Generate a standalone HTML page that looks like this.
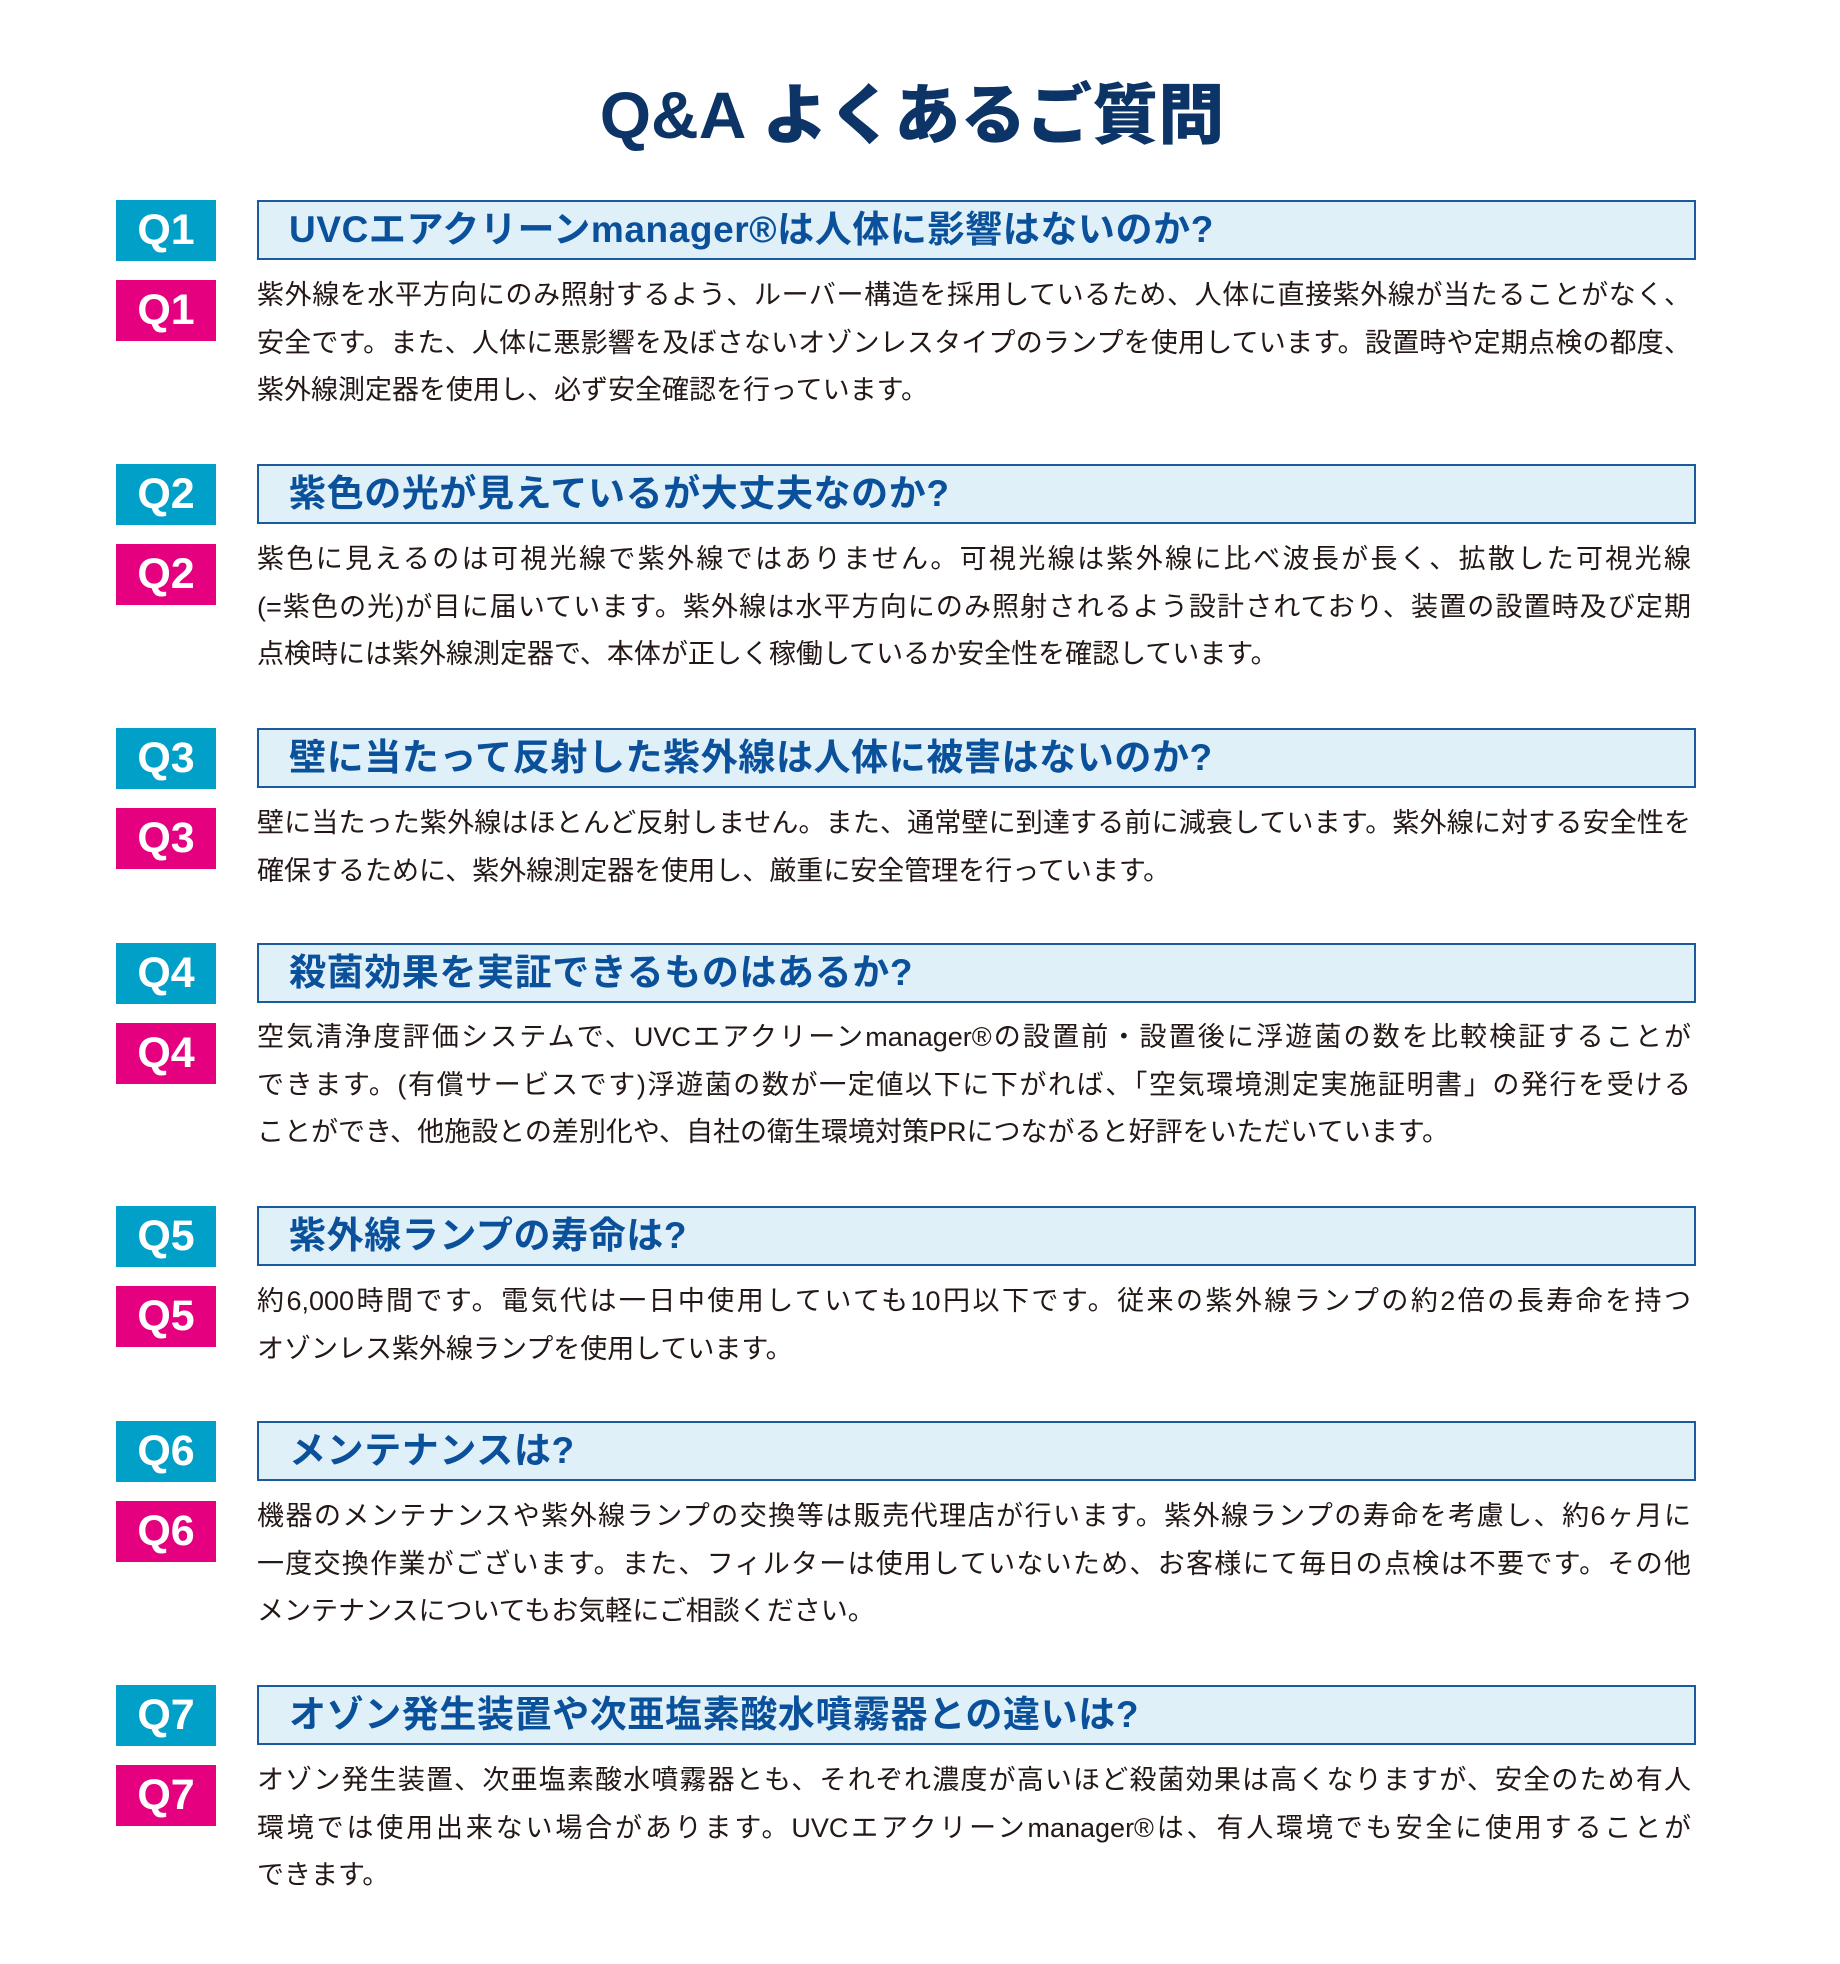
<!DOCTYPE html>
<html><head><meta charset="utf-8"><style>
body{margin:0;width:1840px;height:1964px;background:#fff;font-family:"Liberation Sans","Noto Sans CJK JP",sans-serif;position:relative;overflow:hidden}
h1{position:absolute;left:-8px;top:70px;width:1840px;text-align:center;margin:0;font-size:66px;line-height:90px;color:#0d3466;font-weight:900;letter-spacing:0px}
.b{position:absolute;left:116px;width:100px;height:61px;color:#fff;font-weight:900;font-size:43px;line-height:61px;text-align:center}
.bl{background:#00a0c8}.pk{background:#e4007f}
.h{position:absolute;left:257px;height:56px;background:#dff0f8;border:2px solid #1d5a9c;color:#0b509a;font-weight:bold;font-size:37px;letter-spacing:0.6px;line-height:56px;padding-left:30px;box-sizing:content-box;width:1405px}
.t{position:absolute;left:257px;width:1434px;color:#231815;font-size:27px;line-height:47.5px}
.t div{text-align:justify;text-align-last:justify;white-space:nowrap}
.t div.l{text-align-last:left}
</style></head><body>
<h1>Q&amp;A よくあるご質問</h1>

<div class="b bl" style="top:200px">Q1</div>
<div class="h" style="top:200px">UVCエアクリーンmanager®は人体に影響はないのか?</div>
<div class="b pk" style="top:280px">Q1</div>
<div class="t" style="top:272px"><div>紫外線を水平方向にのみ照射するよう、ルーバー構造を採用しているため、人体に直接紫外線が当たることがなく、</div><div>安全です。また、人体に悪影響を及ぼさないオゾンレスタイプのランプを使用しています。設置時や定期点検の都度、</div><div class="l">紫外線測定器を使用し、必ず安全確認を行っています。</div></div>

<div class="b bl" style="top:464px">Q2</div>
<div class="h" style="top:464px">紫色の光が見えているが大丈夫なのか?</div>
<div class="b pk" style="top:544px">Q2</div>
<div class="t" style="top:536px"><div>紫色に見えるのは可視光線で紫外線ではありません。可視光線は紫外線に比べ波長が長く、拡散した可視光線</div><div>(=紫色の光)が目に届いています。紫外線は水平方向にのみ照射されるよう設計されており、装置の設置時及び定期</div><div class="l">点検時には紫外線測定器で、本体が正しく稼働しているか安全性を確認しています。</div></div>

<div class="b bl" style="top:728px">Q3</div>
<div class="h" style="top:728px">壁に当たって反射した紫外線は人体に被害はないのか?</div>
<div class="b pk" style="top:808px">Q3</div>
<div class="t" style="top:800px"><div>壁に当たった紫外線はほとんど反射しません。また、通常壁に到達する前に減衰しています。紫外線に対する安全性を</div><div class="l">確保するために、紫外線測定器を使用し、厳重に安全管理を行っています。</div></div>

<div class="b bl" style="top:943px">Q4</div>
<div class="h" style="top:943px">殺菌効果を実証できるものはあるか?</div>
<div class="b pk" style="top:1023px">Q4</div>
<div class="t" style="top:1014px"><div>空気清浄度評価システムで、UVCエアクリーンmanager®の設置前・設置後に浮遊菌の数を比較検証することが</div><div>できます。(有償サービスです)浮遊菌の数が一定値以下に下がれば、「空気環境測定実施証明書」の発行を受ける</div><div class="l">ことができ、他施設との差別化や、自社の衛生環境対策PRにつながると好評をいただいています。</div></div>

<div class="b bl" style="top:1206px">Q5</div>
<div class="h" style="top:1206px">紫外線ランプの寿命は?</div>
<div class="b pk" style="top:1286px">Q5</div>
<div class="t" style="top:1278px"><div>約6,000時間です。電気代は一日中使用していても10円以下です。従来の紫外線ランプの約2倍の長寿命を持つ</div><div class="l">オゾンレス紫外線ランプを使用しています。</div></div>

<div class="b bl" style="top:1421px">Q6</div>
<div class="h" style="top:1421px">メンテナンスは?</div>
<div class="b pk" style="top:1501px">Q6</div>
<div class="t" style="top:1493px"><div>機器のメンテナンスや紫外線ランプの交換等は販売代理店が行います。紫外線ランプの寿命を考慮し、約6ヶ月に</div><div>一度交換作業がございます。また、フィルターは使用していないため、お客様にて毎日の点検は不要です。その他</div><div class="l">メンテナンスについてもお気軽にご相談ください。</div></div>

<div class="b bl" style="top:1685px">Q7</div>
<div class="h" style="top:1685px">オゾン発生装置や次亜塩素酸水噴霧器との違いは?</div>
<div class="b pk" style="top:1765px">Q7</div>
<div class="t" style="top:1757px"><div>オゾン発生装置、次亜塩素酸水噴霧器とも、それぞれ濃度が高いほど殺菌効果は高くなりますが、安全のため有人</div><div>環境では使用出来ない場合があります。UVCエアクリーンmanager®は、有人環境でも安全に使用することが</div><div class="l">できます。</div></div>
</body></html>
